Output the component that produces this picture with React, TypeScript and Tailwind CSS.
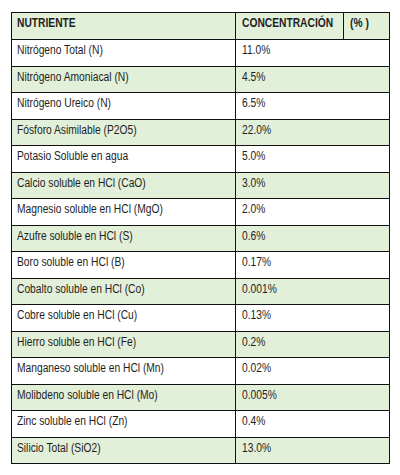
import React from 'react';

const rows: [string, string][] = [
  ['Nitrógeno Total (N)', '11.0%'],
  ['Nitrógeno Amoniacal (N)', '4.5%'],
  ['Nitrógeno Ureico (N)', '6.5%'],
  ['Fósforo Asimilable (P2O5)', '22.0%'],
  ['Potasio Soluble en agua', '5.0%'],
  ['Calcio soluble en HCl (CaO)', '3.0%'],
  ['Magnesio soluble en HCl (MgO)', '2.0%'],
  ['Azufre soluble en HCl (S)', '0.6%'],
  ['Boro soluble en HCl (B)', '0.17%'],
  ['Cobalto soluble en HCl (Co)', '0.001%'],
  ['Cobre soluble en HCl (Cu)', '0.13%'],
  ['Hierro soluble en HCl (Fe)', '0.2%'],
  ['Manganeso soluble en HCl (Mn)', '0.02%'],
  ['Molibdeno soluble en HCl (Mo)', '0.005%'],
  ['Zinc soluble en HCl (Zn)', '0.4%'],
  ['Silicio Total (SiO2)', '13.0%'],
];

// Arial Narrow look: regular Liberation Sans squeezed horizontally
const Txt: React.FC<{ children: React.ReactNode }> = ({ children }) => (
  <span className="inline-block origin-left scale-x-[0.82] whitespace-nowrap">{children}</span>
);

const App: React.FC = () => {
  return (
    <div className="w-[400px] h-[475px] bg-white pt-[12px] pl-[11px] font-['Liberation_Sans',Arial,sans-serif] text-[12.5px] leading-[14px] text-[#1e1e1e]">
      <div className="w-[379px] border border-[#111]">
        {/* header */}
        <div className="flex h-[27px] border-b border-[#111] bg-[#e2efd9] font-bold">
          <div className="w-[224px] shrink-0 border-r border-[#111] pl-[5px] pt-[3px]"><Txt>NUTRIENTE</Txt></div>
          <div className="w-[108px] shrink-0 border-r border-[#111] pl-[6px] pt-[3px]"><Txt>CONCENTRACIÓN</Txt></div>
          <div className="flex-1 pl-[6px] pt-[3px]"><Txt>(% )</Txt></div>
        </div>
        {rows.map(([name, value], i) => (
          <div
            key={name}
            className={`flex ${i === rows.length - 1 ? 'h-[25.5px]' : 'h-[26.5px] border-b border-[#111]'} ${i % 2 === 1 ? 'bg-[#e2efd9]' : 'bg-white'}`}
          >
            <div className="w-[224px] shrink-0 border-r border-[#111] pl-[5px] pt-[3px]"><Txt>{name}</Txt></div>
            <div className="flex-1 pl-[6px] pt-[3px]"><Txt>{value}</Txt></div>
          </div>
        ))}
      </div>
    </div>
  );
};

export default App;
